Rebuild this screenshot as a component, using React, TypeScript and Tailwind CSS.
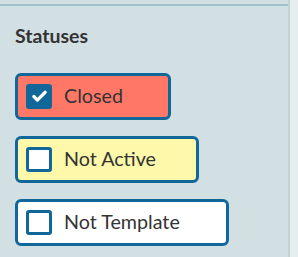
import { Check } from "lucide-react";

type Status = { label: string; checked: boolean; fill: string; width: string };

const statuses: Status[] = [
  { label: "Closed", checked: true, fill: "bg-[#ff7766]", width: "w-[156px]" },
  { label: "Not Active", checked: false, fill: "bg-[#fdf8aa]", width: "w-[184px]" },
  { label: "Not Template", checked: false, fill: "bg-white", width: "w-[214px]" },
];

function StatusToggle({ label, checked, fill, width }: Status) {
  return (
    <label
      className={`flex h-[47px] items-center gap-[12px] rounded-[6px] border-[3px] border-[#11679a] pl-[8px] ${width} ${fill}`}
    >
      <span
        className={`flex h-[25px] w-[26px] shrink-0 items-center justify-center rounded-[3px] border-[3px] border-[#11679a] ${
          checked ? "bg-[#11679a]" : "bg-white"
        }`}
      >
        {checked && <Check className="h-[17px] w-[17px] text-white" strokeWidth={4.5} />}
      </span>
      <span className="whitespace-nowrap text-[19.7px] leading-none text-[#333333]">{label}</span>
    </label>
  );
}

export default function App() {
  return (
    <div className="flex h-[257px] w-[298px] bg-[#e6edef] font-['Lato',sans-serif]">
      <div className="flex w-[290px] flex-col border-r-2 border-[#c2d3d8] bg-[#d2dfe3]">
        <div className="h-[4px] shrink-0" />
        <div className="border-t-2 border-[#9ec3cc] pl-[15px] pt-[20px]">
          <h2 className="text-[19.5px] font-bold leading-none text-[#333333]">Statuses</h2>
          <div className="mt-[27px] flex flex-col gap-[16px]">
            {statuses.map((s) => (
              <StatusToggle key={s.label} {...s} />
            ))}
          </div>
        </div>
      </div>
    </div>
  );
}
